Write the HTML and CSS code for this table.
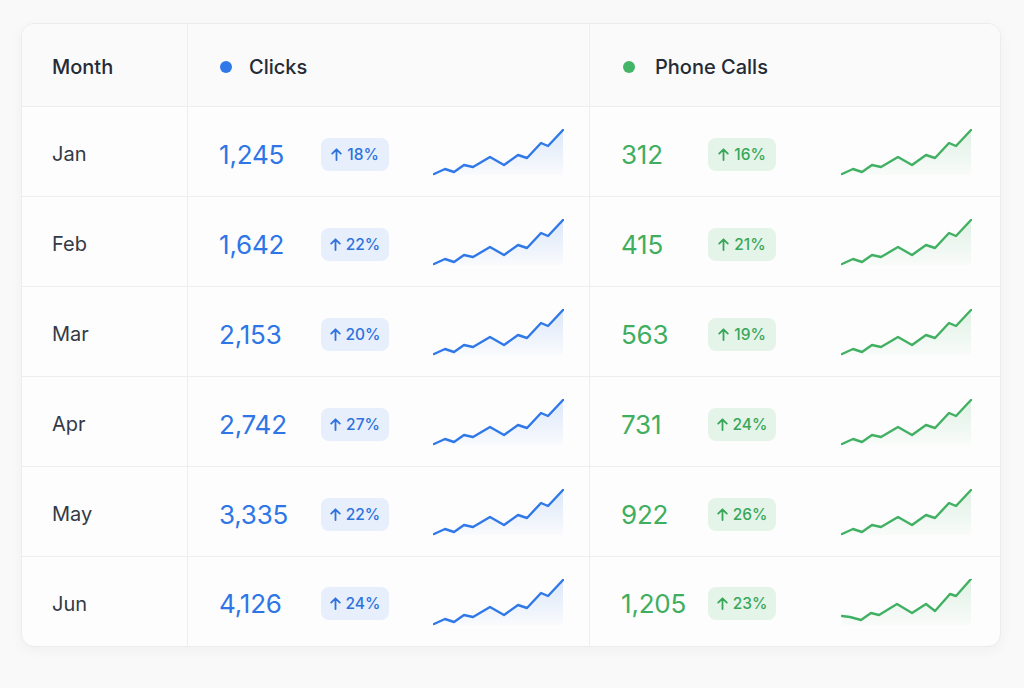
FILE: index.html
```html
<!DOCTYPE html>
<html>
<head>
<meta charset="utf-8">
<link rel="stylesheet" href="styles.css">
</head>
<body>
<div class="card">
  <div class="grid">
    <div class="hcell first">Month</div>
    <div class="hcell"><span class="dot blue"></span>Clicks</div>
    <div class="hcell last"><span class="dot green"></span>Phone Calls</div>
  </div>
  <div id="rows"></div>
</div>
<script src="app.js"></script>
</body>
</html>
```
FILE: styles.css
```css
* { box-sizing: border-box; }
html, body { margin: 0; padding: 0; }
body {
  background: #f9f9f9;
  font-family: Inter, "Noto Sans", sans-serif;
  width: 1024px;
  height: 688px;
  overflow: hidden;
  padding: 23px 0 0 21px;
}
.card {
  width: 980px;
  background: #fdfdfd;
  border: 1px solid #eaecee;
  border-radius: 13px;
  box-shadow: 0 4px 14px rgba(0,0,0,0.04);
  overflow: hidden;
}
.grid {
  display: grid;
  grid-template-columns: 165px 402px 1fr;
}
.hcell {
  height: 83px;
  background: #fafafa;
  display: flex;
  align-items: center;
  padding-left: 32px;
  padding-top: 4px;
  font-size: 20px;
  font-weight: 500;
  color: #252b36;
  border-bottom: 1px solid #eceef1;
  border-left: 1px solid #eceef1;
}
.hcell.first { padding-left: 30px; border-left: none; }
.hcell.last { padding-left: 33px; }
.dot {
  width: 12px;
  height: 12px;
  border-radius: 50%;
  margin-right: 20px;
}
.dot.blue { background: #2f78ea; margin-right: 17px; }
.dot.green { background: #44b466; }
.cell {
  height: 90px;
  border-bottom: 1px solid #eceef1;
  border-left: 1px solid #eceef1;
  display: flex;
  align-items: center;
  padding-left: 31px;
  padding-top: 5px;
}
.row:last-child .cell { border-bottom: none; height: 89px; padding-top: 4px; }
.cell.month {
  border-left: none;
  padding-left: 30px;
  font-size: 20px;
  color: #333a45;
}
.val {
  font-size: 26px;
  font-weight: 400;
  letter-spacing: -0.2px;
}
.clicks .val { width: 102px; color: #2e76e6; }
.calls .val { width: 87px; color: #3fae60; }
.badge {
  width: 68px;
  height: 33px;
  border-radius: 8px;
  display: flex;
  align-items: center;
  justify-content: center;
  font-size: 15.5px;
  font-weight: 500;
  gap: 5px;
}
.badge svg { width: 11px; height: 13px; }
.clicks .badge { background: #e7effc; color: #2e72dd; }
.calls .badge { background: #e5f4e9; color: #38a75a; }
.spark { width: 131px; height: 48px; display: block; }
.clicks .spark { margin-left: 44px; margin-top: -2px; }
.calls .spark { margin-left: 65px; margin-top: -2px; }
```
FILE: app.js
```js
const data = [
  ["Jan", "1,245", "18%", "312", "16%"],
  ["Feb", "1,642", "22%", "415", "21%"],
  ["Mar", "2,153", "20%", "563", "19%"],
  ["Apr", "2,742", "27%", "731", "24%"],
  ["May", "3,335", "22%", "922", "26%"],
  ["Jun", "4,126", "24%", "1,205", "23%"]
];
const base = [[1,45],[12,40],[21,43],[31,36],[40,38],[57,28],[71,36],[85,26],[94,29],[108,14],[115,17],[130,1]];
const lastGreen = [[1,37],[9,38],[20,41],[30,34],[38,36],[56,25],[71,34],[85,25],[94,32],[109,15],[115,17],[130,0]];
function spark(pts, color, id) {
  const line = pts.map(p => p.join(",")).join(" ");
  const area = "M" + pts.map(p => p.join(",")).join(" L") + " L130,46 L1,46 Z";
  return `<svg class="spark" viewBox="0 0 131 48"><defs><linearGradient id="${id}" x1="0" y1="0" x2="0" y2="1"><stop offset="0" stop-color="${color}" stop-opacity="0.16"/><stop offset="1" stop-color="${color}" stop-opacity="0.02"/></linearGradient></defs><path d="${area}" fill="url(#${id})"/><polyline points="${line}" fill="none" stroke="${color}" stroke-width="2.4" stroke-linejoin="round" stroke-linecap="round"/></svg>`;
}
const arrow = c => `<svg viewBox="0 0 11 13"><path d="M5.5 12V1.5M1.2 5.6L5.5 1.3L9.8 5.6" fill="none" stroke="${c}" stroke-width="1.8" stroke-linecap="round" stroke-linejoin="round"/></svg>`;
const rows = document.getElementById("rows");
data.forEach((d, i) => {
  const r = document.createElement("div");
  r.className = "grid row";
  r.innerHTML = `<div class="cell month">${d[0]}</div>
  <div class="cell clicks"><span class="val">${d[1]}</span><span class="badge">${arrow("#2e72dd")}${d[2]}</span>${spark(base, "#2f78e8", "b" + i)}</div>
  <div class="cell calls"><span class="val">${d[3]}</span><span class="badge">${arrow("#38a75a")}${d[4]}</span>${spark(i === 5 ? lastGreen : base, "#41b063", "g" + i)}</div>`;
  rows.appendChild(r);
});
```
